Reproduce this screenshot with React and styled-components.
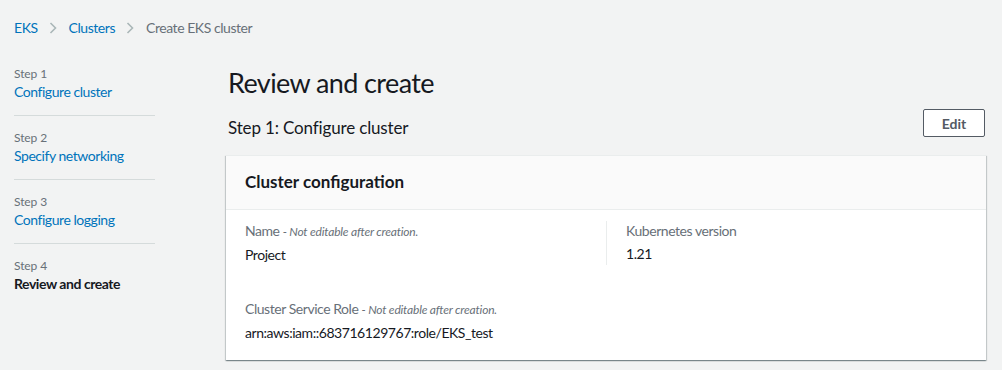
import React from "react";
import styled, { createGlobalStyle } from "styled-components";

const GlobalStyle = createGlobalStyle`
  * { box-sizing: border-box; }
  body {
    margin: 0;
    background: #f2f3f3;
    font-family: Lato, "Liberation Sans", Arial, sans-serif;
    color: #16191f;
    font-size: 14px;
    line-height: 20px;
    letter-spacing: -0.45px;
  }
`;

const steps = [
  { label: "Step 1", title: "Configure cluster" },
  { label: "Step 2", title: "Specify networking" },
  { label: "Step 3", title: "Configure logging" },
  { label: "Step 4", title: "Review and create", current: true },
];

function Chevron() {
  return (
    <svg width="8" height="12" viewBox="0 0 8 12" fill="none">
      <path d="M1.5 1 L6.5 6 L1.5 11" stroke="#aab7b8" strokeWidth="1.6" />
    </svg>
  );
}

export default function App() {
  return (
    <Page>
      <GlobalStyle />
      <Breadcrumbs>
        <Crumb href="#">EKS</Crumb>
        <Sep><Chevron /></Sep>
        <Crumb href="#">Clusters</Crumb>
        <Sep><Chevron /></Sep>
        <Crumb as="span" $current>Create EKS cluster</Crumb>
      </Breadcrumbs>

      <Layout>
        <Steps>
          {steps.map((s) => (
            <StepItem key={s.label}>
              <StepLabel>{s.label}</StepLabel>
              <StepTitle $current={s.current}>{s.title}</StepTitle>
            </StepItem>
          ))}
        </Steps>

        <Main>
          <PageTitle>Review and create</PageTitle>
          <SectionHead>
            <SectionTitle>Step 1: Configure cluster</SectionTitle>
            <EditButton>Edit</EditButton>
          </SectionHead>

          <Card>
            <CardHeader>Cluster configuration</CardHeader>
            <CardBody>
              <Row>
                <Field>
                  <Label>
                    Name <Hint>- Not editable after creation.</Hint>
                  </Label>
                  <Value>Project</Value>
                </Field>
                <Field $divided>
                  <Label>Kubernetes version</Label>
                  <Value>1.21</Value>
                </Field>
              </Row>
              <Row>
                <Field>
                  <Label>
                    Cluster Service Role <Hint>- Not editable after creation.</Hint>
                  </Label>
                  <Value>arn:aws:iam::683716129767:role/EKS_test</Value>
                </Field>
              </Row>
            </CardBody>
          </Card>
        </Main>
      </Layout>
    </Page>
  );
}

const Page = styled.div`
  width: 1002px;
  min-height: 370px;
`;

const Breadcrumbs = styled.nav`
  display: flex;
  align-items: center;
  padding: 18px 14px 0;
  height: 38px;
`;

const Crumb = styled.a`
  color: ${(p) => (p.$current ? "#687078" : "#0073bb")};
  text-decoration: none;
`;

const Sep = styled.span`
  display: flex;
  align-items: center;
  margin: 0 12px 0 11px;
`;

const Layout = styled.div`
  display: flex;
  padding-top: 28px;
`;

const Steps = styled.ol`
  list-style: none;
  margin: 0 0 0 14px;
  padding: 0;
  width: 141px;
  flex: none;
`;

const StepItem = styled.li`
  padding-bottom: 13px;
  margin-bottom: 14px;
  border-bottom: 1px solid #d5dbdb;

  &:last-child {
    border-bottom: none;
  }
`;

const StepLabel = styled.div`
  font-size: 12px;
  line-height: 16px;
  letter-spacing: -0.1px;
  color: #687078;
`;

const StepTitle = styled.div`
  font-size: 14px;
  line-height: 20px;
  color: ${(p) => (p.$current ? "#16191f" : "#0073bb")};
  font-weight: ${(p) => (p.$current ? 700 : 400)};
`;

const Main = styled.main`
  flex: 1;
  margin: 0 16px 0 71px;
`;

const PageTitle = styled.h1`
  margin: -1px 0 0 2px;
  font-size: 27px;
  line-height: 36px;
  font-weight: 400;
  letter-spacing: -0.6px;
`;

const SectionHead = styled.div`
  display: flex;
  align-items: center;
  justify-content: space-between;
  margin-top: 8px;
  height: 28px;
`;

const SectionTitle = styled.h2`
  margin: 10px 0 0 2px;
  font-size: 17px;
  line-height: 22px;
  font-weight: 400;
  letter-spacing: -0.15px;
`;

const EditButton = styled.button`
  width: 62px;
  height: 28px;
  margin-right: 1px;
  border: 1px solid #545b64;
  border-radius: 2px;
  background: #fff;
  color: #545b64;
  font-family: inherit;
  font-size: 14px;
  font-weight: 700;
  letter-spacing: 0;
`;

const Card = styled.section`
  margin-top: 18px;
  background: #fff;
  border-top: 1px solid #eaeded;
  box-shadow: 0 1px 1px 0 rgba(0, 28, 36, 0.3),
    1px 1px 1px 0 rgba(0, 28, 36, 0.15),
    -1px 1px 1px 0 rgba(0, 28, 36, 0.15);
`;

const CardHeader = styled.h3`
  margin: 0;
  padding: 15px 19px 16px;
  background: #fafafa;
  border-bottom: 1px solid #eaeded;
  font-size: 17px;
  line-height: 22px;
  font-weight: 700;
  letter-spacing: 0;
`;

const CardBody = styled.div`
  display: flex;
  flex-direction: column;
  gap: 34px;
  padding: 11px 20px 17px 19px;
`;

const Row = styled.div`
  display: grid;
  grid-template-columns: 361px 1fr;
`;

const Field = styled.div`
  padding-left: ${(p) => (p.$divided ? "19px" : "0")};
  border-left: ${(p) => (p.$divided ? "1px solid #eaeded" : "none")};
`;

const Label = styled.div`
  color: #687078;
  margin-bottom: 3px;
`;

const Hint = styled.i`
  font-size: 12px;
  letter-spacing: -0.2px;
`;

const Value = styled.div`
  color: #16191f;
`;
